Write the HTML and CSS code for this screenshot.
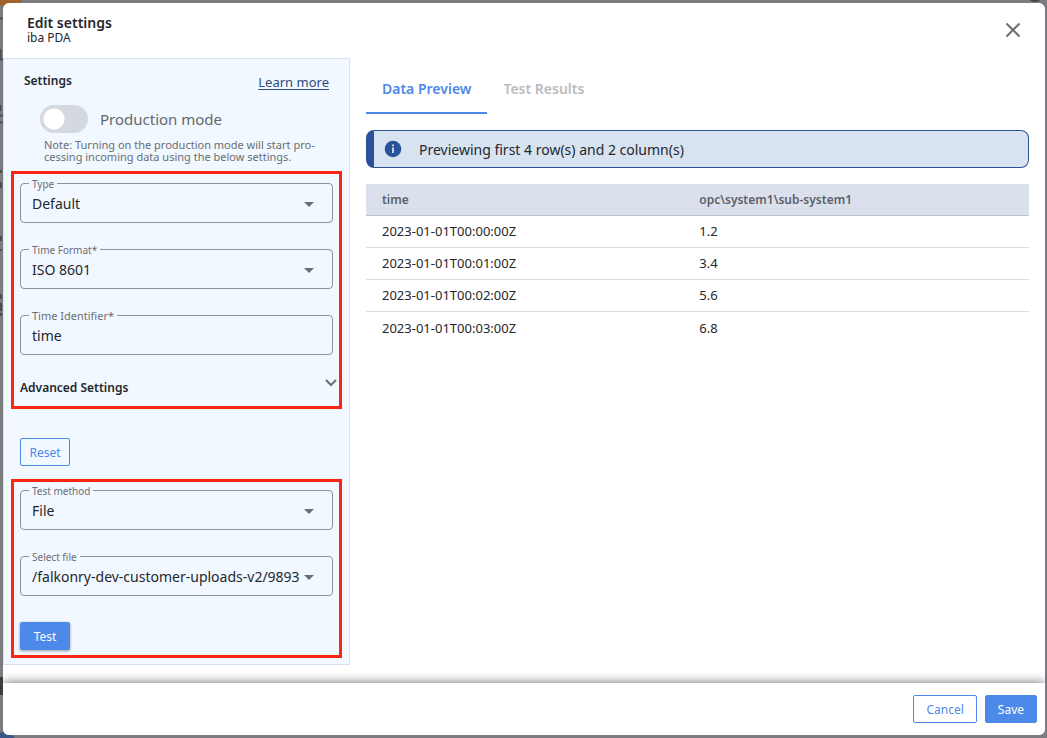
FILE: index.html
```html
<!DOCTYPE html>
<html lang="en">
<head>
<meta charset="utf-8">
<title>Edit settings</title>
<link rel="stylesheet" href="styles.css">
</head>
<body>
<div class="backdrop" aria-hidden="true">
  <span class="blob blob-orange"></span>
  <span class="blob blob-blue"></span>
  <span class="blob blob-dark"></span>
  <span class="blob blob-bar"></span>
  <svg class="backdrop-edge" width="3" height="330" viewBox="0 0 3 330"><path d="M0 18.500h3M0 115.500h3M0 122.500h3M0 59.500h3M.5 49v10M.5 105v6M1 170v3M1 182v6M1 236v5M0 250h2M1 294v5M1 303v8M1 313v3" fill="none" stroke="#4c4d50" stroke-width="2"/></svg>
</div>
<main class="dialog" role="dialog" aria-labelledby="dialog-title">
  <header class="dialog-header">
    <div>
      <h1 class="title" id="dialog-title">Edit settings</h1>
      <p class="subtitle">iba PDA</p>
    </div>
    <button class="close" type="button" aria-label="Close">
      <svg width="16" height="16" viewBox="0 0 16 16"><path d="M1.5 1.5l13 13M14.500 1.500l-13 13" fill="none" stroke="#6f6f6f" stroke-width="2"/></svg>
    </button>
  </header>
  <div class="content">
    <form class="settings">
      <div class="settings-head">
        <h2 class="section-title">Settings</h2>
        <a class="learn" href="#">Learn more</a>
      </div>
      <label class="toggle"><input class="switch" type="checkbox" role="switch">Production mode</label>
      <p class="note">Note: Turning on the production mode will start pro-<br>cessing incoming data using the below settings.</p>
      <section class="group group-main">
        <div class="field">
          <label class="field-label" for="type">Type</label>
          <select class="control" id="type"><option>Default</option></select>
        </div>
        <div class="field">
          <label class="field-label" for="format">Time Format*</label>
          <select class="control" id="format"><option>ISO 8601</option></select>
        </div>
        <div class="field plain">
          <label class="field-label" for="identifier">Time Identifier*</label>
          <input class="control" id="identifier" type="text" value="time">
        </div>
        <button class="advanced" type="button">Advanced Settings
          <svg width="14" height="10" viewBox="0 0 14 10"><path d="M2 2l5 5 5-5" fill="none" stroke="#6b6e73" stroke-width="2"/></svg>
        </button>
      </section>
      <button class="btn outline reset" type="button">Reset</button>
      <section class="group">
        <div class="field">
          <label class="field-label" for="method">Test method</label>
          <select class="control" id="method"><option>File</option></select>
        </div>
        <div class="field">
          <label class="field-label" for="file">Select file</label>
          <select class="control" id="file"><option>/falkonry-dev-customer-uploads-v2/9893</option></select>
        </div>
        <button class="btn solid raised" type="button">Test</button>
      </section>
    </form>
    <section class="preview">
      <div class="tabs" role="tablist">
        <button class="tab active" type="button" role="tab" aria-selected="true">Data Preview</button>
        <button class="tab" type="button" role="tab" aria-selected="false">Test Results</button>
      </div>
      <div class="notice">
        <svg width="18" height="18" viewBox="0 0 18 18"><circle cx="9" cy="9" r="8.300" fill="#2a529b"/><path d="M9 7.500v5.500M9 4.500v1.800" stroke="#d8e3f1" stroke-width="1.800"/></svg>
        <span>Previewing first 4 row(s) and 2 column(s)</span>
      </div>
      <table class="data">
        <thead><tr><th>time</th><th>opc\system1\sub-system1</th></tr></thead>
        <tbody>
          <tr><td>2023-01-01T00:00:00Z</td><td>1.2</td></tr>
          <tr><td>2023-01-01T00:01:00Z</td><td>3.4</td></tr>
          <tr><td>2023-01-01T00:02:00Z</td><td>5.6</td></tr>
          <tr><td>2023-01-01T00:03:00Z</td><td>6.8</td></tr>
        </tbody>
      </table>
    </section>
  </div>
  <footer class="dialog-footer">
    <button class="btn outline" type="button">Cancel</button>
    <button class="btn solid" type="button">Save</button>
  </footer>
</main>
</body>
</html>
```

FILE: styles.css
```css
* { box-sizing: border-box; }
body {
  margin: 0;
  min-height: 100vh;
  display: flex;
  padding: 3px 2px 3px 3px;
  background: #7b7c80;
  color: #24272c;
  font-family: "Noto Sans", "Open Sans", sans-serif;
  font-size: 14px;
}
h1, h2, p { margin: 0; }
button, input, select { font: inherit; color: inherit; }
button { cursor: pointer; }
.backdrop { position: absolute; inset: 0; overflow: hidden; }
.backdrop-edge { position: absolute; left: 0; top: 0; }
.blob { position: absolute; }
.blob-orange { left: -6px; top: -22px; width: 30px; height: 30px; border-radius: 50%; background: #a0622a; }
.blob-blue { left: -8px; bottom: -18px; width: 24px; height: 24px; border-radius: 50%; background: #3b5688; }
.blob-dark { right: 4px; top: -14px; width: 16px; height: 16px; border-radius: 50%; background: #454545; }
.blob-bar { left: 0; bottom: 43px; width: 3px; height: 18px; background: #3d3d40; }
.dialog {
  position: relative;
  flex: 1;
  display: flex;
  flex-direction: column;
  background: #fff;
  border-radius: 6px;
  overflow: hidden;
}
.dialog-header {
  display: flex;
  justify-content: space-between;
  padding: 11px 24px 0;
  min-height: 55px;
}
.title { font-size: 14px; line-height: 17px; font-weight: 600; }
.subtitle { font-size: 12px; line-height: 14px; }
.close { align-self: flex-start; display: flex; padding: 8px 0; border: 0; background: none; }
.content { flex: 1; display: flex; }
.settings {
  flex: 0 0 347px;
  align-self: flex-start;
  background: #f1f8ff;
  border: 1px solid #d6e2ef;
  padding: 12px 7px 6px;
}
.settings-head { display: flex; justify-content: space-between; height: 24px; padding: 0 13px; }
.section-title { font-size: 12px; line-height: 20px; font-weight: 600; }
.learn { font-size: 13px; line-height: 22px; color: #2f4b7c; text-underline-offset: 2px; }
.toggle {
  display: flex;
  align-items: center;
  gap: 12px;
  padding: 10px 29px 0;
  font-size: 15px;
  color: #65686d;
}
.switch {
  appearance: none;
  width: 48px;
  height: 28px;
  margin: 0;
  border-radius: 14px;
  background: radial-gradient(circle at 14px 14px, #fff 10px, transparent 11px) #d4d8df;
}
.note { padding: 6px 0 8px 33px; font-size: 11px; line-height: 12px; color: #6b6e73; white-space: nowrap; }
.group {
  display: flex;
  flex-direction: column;
  align-items: flex-start;
  gap: 26px;
  padding: 8px 6px 5px;
  border: 3px solid #fa2613;
}
.group-main { padding-top: 9px; }
.field {
  position: relative;
  display: flex;
  width: 100%;
  height: 40px;
  border: 1px solid #8e9299;
  border-radius: 4px;
}
.field::after {
  content: "";
  position: absolute;
  right: 18px;
  top: 18px;
  border: 5px solid transparent;
  border-top-color: #6b6e73;
  border-bottom: 0;
  pointer-events: none;
}
.plain::after { display: none; }
.field-label {
  position: absolute;
  left: 8px;
  top: -6px;
  padding: 0 3px;
  background: #f1f8ff;
  font-size: 10px;
  line-height: 12px;
  color: #6b6e73;
}
.plain .field-label { font-size: 11px; }
.control {
  appearance: none;
  flex: 1;
  min-width: 0;
  margin: 0 30px 0 0;
  padding: 0 0 0 11px;
  border: 0;
  background: none;
  outline: none;
}
.advanced {
  align-self: stretch;
  display: flex;
  justify-content: space-between;
  margin: -3px -5px 3px 0;
  padding: 0;
  border: 0;
  background: none;
  font-size: 12px;
  line-height: 20px;
  font-weight: 600;
}
.btn {
  height: 28px;
  padding: 0 12px;
  border: 1px solid #4d89e8;
  border-radius: 2px;
  font-size: 12px;
}
.outline { background: #fff; color: #4d89e8; }
.solid { background: #4d89e8; color: #fff; }
.raised { min-width: 50px; box-shadow: 0 1px 3px #0006; }
.reset { display: block; width: 50px; margin: 29px 9px 13px; padding: 0; background: none; }
.preview { flex: 1; padding: 6px 16px 0; }
.tabs { display: flex; height: 50px; }
.tab {
  padding: 0 16px;
  border: 0;
  border-bottom: 2px solid transparent;
  background: none;
  font-weight: 600;
  color: #babcbe;
}
.active { color: #4d89e8; border-color: #4d89e8; }
.notice {
  display: flex;
  align-items: center;
  gap: 17px;
  height: 38px;
  margin: 16px 0;
  padding-left: 10px;
  border: 1px solid #2a529b;
  border-left-width: 8px;
  border-radius: 8px;
  background: #d8e3f1;
}
.data { width: 100%; table-layout: fixed; border-collapse: separate; border-spacing: 0; font-size: 13px; }
.data th, .data td { height: 32px; padding: 0 16px 1px; text-align: left; border-bottom: 1px solid #dedede; }
.data th { background: #dbe0ed; color: #5d6066; font-size: 12px; font-weight: 600; border-color: #bcc2cf; }
.data th:first-child { width: 48%; }
.data th:last-child, .data td:last-child { padding-left: 15px; }
.data tbody tr:last-child td { border-bottom: 0; }
.dialog-footer {
  display: flex;
  justify-content: flex-end;
  gap: 8px;
  padding: 12px 8px;
  background: #fff;
  box-shadow: 0 0 10px #0009;
}
```
